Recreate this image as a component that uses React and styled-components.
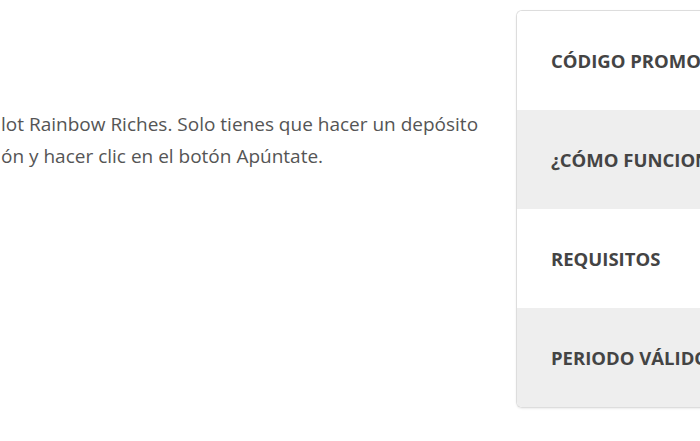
import React from "react";
import styled, { createGlobalStyle } from "styled-components";

const GlobalStyle = createGlobalStyle`
  html, body {
    margin: 0;
    padding: 0;
    background: #ffffff;
    overflow: hidden;
  }
  body {
    font-family: "Open Sans", "Noto Sans", sans-serif;
  }
`;

const Page = styled.div`
  display: flex;
  width: 700px;
  height: 441px;
  overflow: hidden;
`;

const Content = styled.div`
  flex: 0 0 516px;
  padding-top: 108px;
  p {
    margin: 0;
    padding-left: 1px;
    font-size: 19px;
    line-height: 32px;
    color: #555555;
    white-space: nowrap;
  }
`;

const Card = styled.div`
  flex: 0 0 240px;
  margin-top: 10px;
  align-self: flex-start;
  border: 1px solid #dddddd;
  border-right: none;
  border-radius: 6px 0 0 6px;
  overflow: hidden;
  box-shadow: 0 1px 2px rgba(0, 0, 0, 0.08);
`;

const Row = styled.div`
  display: flex;
  align-items: center;
  height: 99px;
  padding-left: 34px;
  background: ${(p) => (p.$shaded ? "#eeeeee" : "#ffffff")};
  font-size: 18.5px;
  font-weight: 700;
  color: #444444;
  white-space: nowrap;
`;

const rows = ["CÓDIGO PROMO", "¿CÓMO FUNCIONA?", "REQUISITOS", "PERIODO VÁLIDO"];

export default function App() {
  return (
    <>
      <GlobalStyle />
      <Page>
        <Content>
          <p>
            lot Rainbow Riches. Solo tienes que hacer un depósito
            <br />
            ón y hacer clic en el botón Apúntate.
          </p>
        </Content>
        <Card>
          {rows.map((r, i) => (
            <Row key={r} $shaded={i % 2 === 1}>
              {r}
            </Row>
          ))}
        </Card>
      </Page>
    </>
  );
}
